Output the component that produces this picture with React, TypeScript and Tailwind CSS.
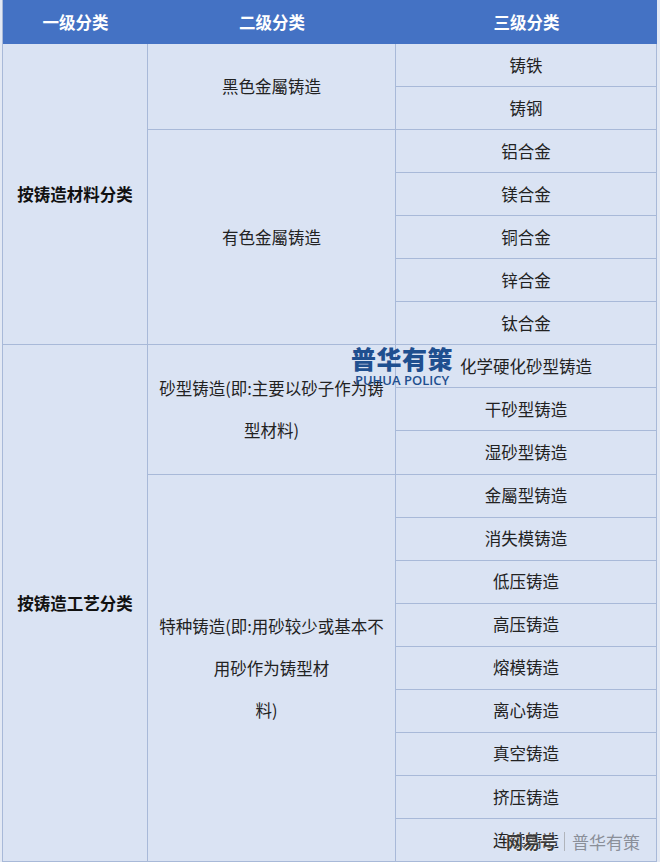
const third = [
  '铸铁',
  '铸钢',
  '铝合金',
  '镁合金',
  '铜合金',
  '锌合金',
  '钛合金',
  '化学硬化砂型铸造',
  '干砂型铸造',
  '湿砂型铸造',
  '金屬型铸造',
  '消失模铸造',
  '低压铸造',
  '高压铸造',
  '熔模铸造',
  '离心铸造',
  '真空铸造',
  '挤压铸造',
  '连续铸造',
];

const cell = 'flex items-center justify-center border-r border-b border-[#a8b9d8] text-center';

export default function App() {
  return (
    <div
      className="w-[660px] h-[862px] bg-[#e3e9f4] pl-[2px] text-[16.5px] text-[#222] overflow-hidden"
      style={{ fontFamily: '"Noto Sans CJK SC", "Noto Sans", sans-serif' }}
    >
      <div className="relative w-[655px] border-l border-[#a8b9d8] bg-[#dae3f3]">
        {/* header */}
        <div className="grid grid-cols-[145px_248px_1fr] h-[44px] bg-[#4472c4] font-bold text-white">
          <div className="flex items-center justify-center">一级分类</div>
          <div className="flex items-center justify-center">二级分类</div>
          <div className="flex items-center justify-center">三级分类</div>
        </div>

        {/* body */}
        <div className="grid h-[818px] grid-cols-[145px_248px_1fr] grid-rows-[repeat(19,1fr)]">
          <div className={`${cell} col-start-1 row-start-1 row-span-7 font-bold text-[#111]`}>按铸造材料分类</div>
          <div className={`${cell} col-start-1 row-start-8 row-span-12 font-bold text-[#111]`}>按铸造工艺分类</div>

          <div className={`${cell} col-start-2 row-start-1 row-span-2`}>黑色金屬铸造</div>
          <div className={`${cell} col-start-2 row-start-3 row-span-5`}>有色金屬铸造</div>
          <div className={`${cell} col-start-2 row-start-8 row-span-3 flex-col leading-[42px]`}>
            <span>砂型铸造(即:主要以砂子作为铸</span>
            <span>型材料)</span>
          </div>
          <div className={`${cell} col-start-2 row-start-11 row-span-9 flex-col leading-[42px]`}>
            <span>特种铸造(即:用砂较少或基本不</span>
            <span>用砂作为铸型材</span>
            <span className="pr-[10px]">料)</span>
          </div>

          {third.map((t, i) => (
            <div key={t} className={`${cell} col-start-3`} style={{ gridRowStart: i + 1 }}>
              {t}
            </div>
          ))}
        </div>

        {/* watermark */}
        <div className="absolute left-[348px] top-[346px] flex flex-col items-center leading-none text-[#1f4f8f]">
          <span className="text-[25px] font-black tracking-[0.5px]">普华有策</span>
          <span className="mt-[3px] text-[13px] font-semibold" style={{ fontFamily: '"Open Sans", "Noto Sans", sans-serif' }}>
            PUHUA POLICY
          </span>
        </div>

        <div className="absolute left-[503px] top-[832px] flex items-center gap-[7px] text-[17px] leading-none">
          <span className="font-bold text-[#3a3a3a] [text-shadow:0_0_2px_#fff,0_0_1px_#fff]">网易号</span>
          <span className="h-[19px] w-px bg-[#b0b4bb]" />
          <span className="text-[#8a8f99]">普华有策</span>
        </div>
      </div>
    </div>
  );
}
